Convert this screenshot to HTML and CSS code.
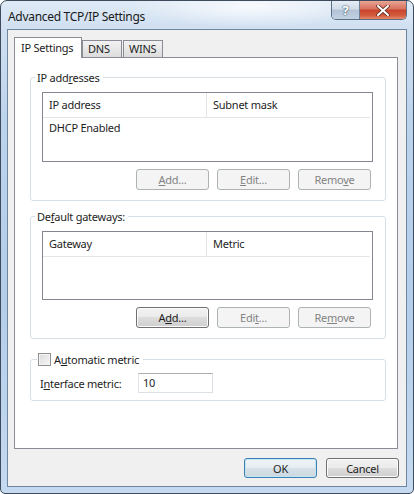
FILE: index.html
```html
<!DOCTYPE html>
<html lang="en">
<head>
    <meta charset="UTF-8">
    <meta name="viewport" content="width=device-width, initial-scale=1.0">
    <title>Advanced TCP/IP Settings</title>
    <link rel="stylesheet" href="styles.css">
</head>
<body>
    <div class="window">
        <div class="titlebar">
            <span class="title">Advanced TCP/IP Settings</span>
            <div class="caption-buttons">
                <div class="cap-btn help">?</div>
                <div class="cap-btn close">
                    <svg width="14" height="11" viewBox="0 0 14 11">
                        <path d="M2 1 L12 10 M12 1 L2 10" stroke="#5a2a22" stroke-width="3.6" stroke-linecap="round"/>
                        <path d="M2 1 L12 10 M12 1 L2 10" stroke="#ffffff" stroke-width="2" stroke-linecap="round"/>
                    </svg>
                </div>
            </div>
        </div>
        <div class="client">
            <div class="tabstrip">
                <div class="tab active">IP Settings</div>
                <div class="tab">DNS</div>
                <div class="tab">WINS</div>
            </div>
            <div class="tab-panel">
                <fieldset class="group">
                    <legend>IP add<u>r</u>esses</legend>
                    <div class="listview lv-ip">
                        <div class="lv-header">
                            <div class="col col1">IP address</div>
                            <div class="col col2">Subnet mask</div>
                        </div>
                        <div class="lv-row">DHCP Enabled</div>
                    </div>
                    <div class="button-row">
                        <button class="btn" disabled><u>A</u>dd...</button>
                        <button class="btn" disabled><u>E</u>dit...</button>
                        <button class="btn" disabled>Remo<u>v</u>e</button>
                    </div>
                </fieldset>

                <fieldset class="group">
                    <legend>De<u>f</u>ault gateways:</legend>
                    <div class="listview lv-gw">
                        <div class="lv-header">
                            <div class="col col1">Gateway</div>
                            <div class="col col2">Metric</div>
                        </div>
                    </div>
                    <div class="button-row">
                        <button class="btn">A<u>d</u>d...</button>
                        <button class="btn" disabled>Edi<u>t</u>...</button>
                        <button class="btn" disabled>Re<u>m</u>ove</button>
                    </div>
                </fieldset>

                <fieldset class="group metric-group">
                    <legend class="check-legend">
                        <span class="checkbox"></span>
                        <span>A<u>u</u>tomatic metric</span>
                    </legend>
                    <div class="metric-row">
                        <label class="metric-label">I<u>n</u>terface metric:</label>
                        <div class="textbox">10</div>
                    </div>
                </fieldset>
            </div>
            <div class="footer">
                <button class="btn default">OK</button>
                <button class="btn">Cancel</button>
            </div>
        </div>
    </div>
</body>
</html>
```

FILE: styles.css
```css
body {
    margin: 0;
    background-color: #ffffff;
    font-family: "Noto Sans", "Open Sans", sans-serif;
    font-size: 11px;
    letter-spacing: -0.25px;
    color: #1e1e1e;
}

u {
    text-decoration-thickness: 1px;
    text-underline-offset: 1px;
}

.window {
    width: 414px;
    height: 494px;
    box-sizing: border-box;
    border: 1px solid #3d4b5c;
    border-radius: 7px 7px 5px 5px;
    padding: 0 6px 6px 6px;
    display: flex;
    flex-direction: column;
    background:
        radial-gradient(ellipse 120px 20px at 250px 6px, rgba(255,255,255,0.8), rgba(255,255,255,0)),
        linear-gradient(to bottom, #dfeaf6 0, #cfdff1 30px, #bcd3ec 120px, #b4cde9 300px, #c5daf0 494px);
}

/* title bar */
.titlebar {
    height: 28px;
    display: flex;
    align-items: flex-start;
}

.title {
    padding-left: 1px;
    margin-top: 7px;
    font-size: 12px;
    letter-spacing: -0.3px;
    color: #1a1a1a;
}

.caption-buttons {
    margin-left: auto;
    display: flex;
    height: 18px;
    border: 1px solid #5a6e86;
    border-top: none;
    border-radius: 0 0 5px 5px;
    overflow: hidden;
}

.cap-btn {
    height: 18px;
    display: flex;
    align-items: center;
    justify-content: center;
}

.help {
    width: 27px;
    border-right: 1px solid #6b7f96;
    background: linear-gradient(to bottom, #e6edf5 0, #d1dce8 45%, #b3c3d6 50%, #c3d3e4 100%);
    color: #ffffff;
    font-weight: bold;
    font-size: 13px;
    text-shadow: 0 0 2px #3e5066, 0 0 1px #3e5066;
}

.close {
    width: 46px;
    background: linear-gradient(to bottom, #e8a595 0, #d9715c 45%, #c7432b 50%, #d45b3f 80%, #e48a6a 100%);
}

/* client area */
.client {
    flex: 1;
    background-color: #f0f0f0;
    border: 1px solid #6f86a0;
    padding: 7px 8px 0 6px;
    display: flex;
    flex-direction: column;
}

.tabstrip {
    display: flex;
    align-items: flex-end;
    height: 20px;
    position: relative;
    z-index: 1;
}

.tab {
    height: 16px;
    line-height: 15px;
    padding: 0 5px;
    border: 1px solid #898c95;
    border-bottom: none;
    background: linear-gradient(to bottom, #f2f2f2, #dcdcdc);
    margin-bottom: 0;
}

.tab + .tab {
    margin-left: 1px;
}

.tab.active {
    height: 20px;
    line-height: 19px;
    width: 55px;
    padding: 0 5px 0 6px;
    background: #ffffff;
    margin-bottom: -1px;
}

.tab.active + .tab {
    margin-left: 0;
    width: 28px;
}

.tab:last-child {
    width: 28px;
}

.tab-panel {
    height: 392px;
    box-sizing: border-box;
    background: #ffffff;
    border: 1px solid #898c95;
    padding: 12px 11px 0 15px;
}

/* group boxes */
.group {
    margin: 0;
    border: 1px solid #d5dfe5;
    border-radius: 3px;
    padding: 7px 12px 10px 11px;
    min-width: 0;
}

.group + .group {
    margin-top: 8px;
}

.metric-group {
    margin-top: 13px !important;
    padding: 6px 12px 7px 9px;
}

legend {
    line-height: 15px;
    padding: 0 3px 0 2px;
    margin-left: -7px;
}

.check-legend {
    display: flex;
    align-items: center;
    margin-left: -3px;
    padding: 0 4px 0 1px;
}

.checkbox {
    width: 11px;
    height: 11px;
    border: 1px solid #8f8f8f;
    background: linear-gradient(135deg, #dcdcdc, #f6f6f6);
    box-shadow: inset 0 0 0 1px #f4f4f4;
    margin-right: 3px;
}

/* list views */
.listview {
    border: 1px solid #828790;
    background: #ffffff;
}

.lv-ip {
    height: 68px;
}

.lv-gw {
    height: 67px;
}

.lv-header {
    display: flex;
    height: 24px;
    border-bottom: 1px solid #e5e5e5;
    margin-right: 2px;
}

.col {
    line-height: 24px;
    padding-left: 6px;
}

.col1 {
    width: 157px;
    border-right: 1px solid #e5e5e5;
}

.lv-row {
    height: 20px;
    line-height: 20px;
    padding-left: 6px;
}

/* buttons */
.button-row {
    display: flex;
    justify-content: flex-end;
    gap: 8px;
    margin-top: 7px;
    margin-right: 2px;
}

.btn {
    width: 73px;
    height: 21px;
    padding: 0;
    font-family: inherit;
    font-size: 11px;
    letter-spacing: -0.25px;
    color: #1e1e1e;
    border: 1px solid #707070;
    border-radius: 3px;
    background: linear-gradient(to bottom, #f2f2f2 0, #ebebeb 50%, #dddddd 50%, #cfcfcf 100%);
    box-shadow: inset 0 0 0 1px #fcfcfc;
}

.btn:disabled {
    color: #838383;
    border-color: #adb2b5;
    background: #f4f4f4;
    box-shadow: none;
}

/* metric */
.metric-row {
    display: flex;
    align-items: center;
}

.metric-label {
    width: 98px;
}

.textbox {
    width: 69px;
    height: 18px;
    line-height: 18px;
    padding-left: 4px;
    border: 1px solid #dbdfe6;
    border-top-color: #abadb3;
    border-left-color: #e2e3ea;
    background: #ffffff;
}

/* dialog footer */
.footer {
    display: flex;
    justify-content: flex-end;
    gap: 9px;
    margin-top: 9px;
    margin-right: -1px;
}

.footer .btn {
    height: 20px;
}

.btn.default {
    border-color: #3c7fb1;
    box-shadow: inset 0 0 0 1px #c4e5f6;
    background: linear-gradient(to bottom, #eef3f6 0, #e6edf1 50%, #d7e1e7 50%, #cbd8df 100%);
}
```
